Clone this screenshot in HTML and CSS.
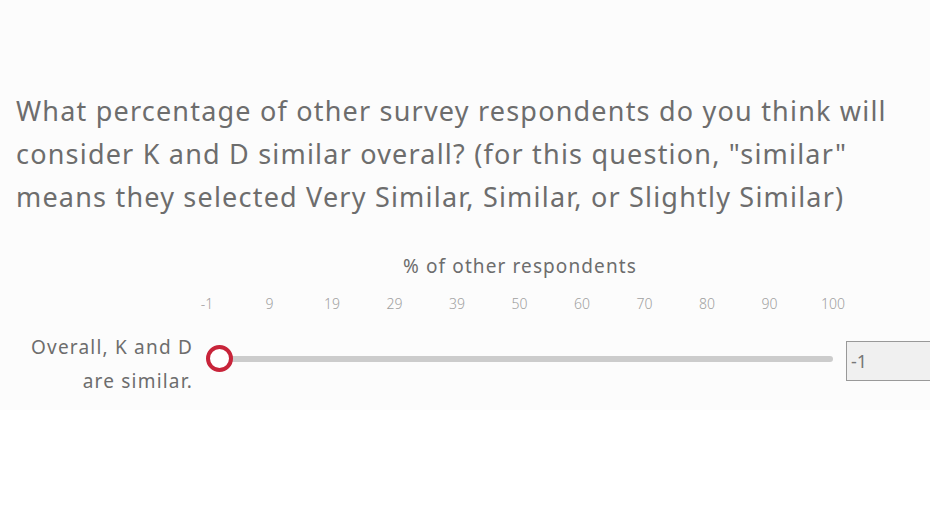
FILE: index.html
```html
<!DOCTYPE html>
<html>
<head>
<meta charset="utf-8">
<link rel="stylesheet" href="styles.css">
</head>
<body>
<div class="page">
  <div class="question">What percentage of other survey respondents do you think will consider K and D similar overall? (for this question, "similar" means they selected Very Similar, Similar, or Slightly Similar)</div>
  <div class="matrix">
    <div class="spacer"></div>
    <div class="head">
      <div class="caption">% of other respondents</div>
      <div class="ticks">
        <span>-1</span><span>9</span><span>19</span><span>29</span><span>39</span><span>50</span><span>60</span><span>70</span><span>80</span><span>90</span><span>100</span>
      </div>
    </div>
    <div class="spacer"></div>
    <div class="row-label">Overall, K and D<br>are similar.</div>
    <div class="slider">
      <div class="track"></div>
      <div class="thumb"></div>
    </div>
    <div class="valuebox">-1</div>
  </div>
</div>
</body>
</html>
```

FILE: styles.css
```css
html, body {
  margin: 0;
  padding: 0;
  background: #ffffff;
}
body {
  font-family: "Noto Sans", "DejaVu Sans", sans-serif;
  color: #6d6d6d;
  overflow: hidden;
}
.page {
  background: #fcfcfc;
  height: 410px;
  padding: 89px 0 0 16px;
  box-sizing: border-box;
}
.question {
  font-size: 27px;
  line-height: 43px;
  width: 880px;
  letter-spacing: 1.2px;
}
.matrix {
  display: grid;
  grid-template-columns: 178px 652px 90px;
  margin-top: 35px;
}
.head {
  display: flex;
  flex-direction: column;
}
.caption {
  text-align: center;
  font-size: 19px;
  line-height: 26px;
  letter-spacing: 1.1px;
}
.ticks {
  display: flex;
  justify-content: space-between;
  margin-top: 17px;
  padding-left: 2px;
  width: 649px;
  box-sizing: border-box;
  font-size: 14px;
  color: #a0a0a0;
  font-weight: 300;
  line-height: 16px;
}
.ticks span {
  width: 22px;
  text-align: center;
}
.row-label {
  margin-top: 18px;
  text-align: right;
  font-size: 19px;
  line-height: 34px;
  letter-spacing: 1.2px;
  margin-right: 1px;
}
.slider {
  position: relative;
  margin-top: 33px;
  height: 27px;
  margin-left: 25px;
  width: 614px;
}
.track {
  position: absolute;
  left: 0;
  right: 0;
  top: 11px;
  height: 6px;
  border-radius: 3px;
  background: #cccccc;
}
.thumb {
  position: absolute;
  left: -13px;
  top: 0;
  width: 19px;
  height: 19px;
  border: 4px solid #c8243a;
  border-radius: 50%;
  background: #ffffff;
}
.valuebox {
  margin-top: 29px;
  height: 40px;
  width: 90px;
  border: 1px solid #999999;
  background: #f0f0f0;
  font-size: 18px;
  line-height: 38px;
  padding-left: 4px;
  color: #777777;
  box-sizing: border-box;
}
```
